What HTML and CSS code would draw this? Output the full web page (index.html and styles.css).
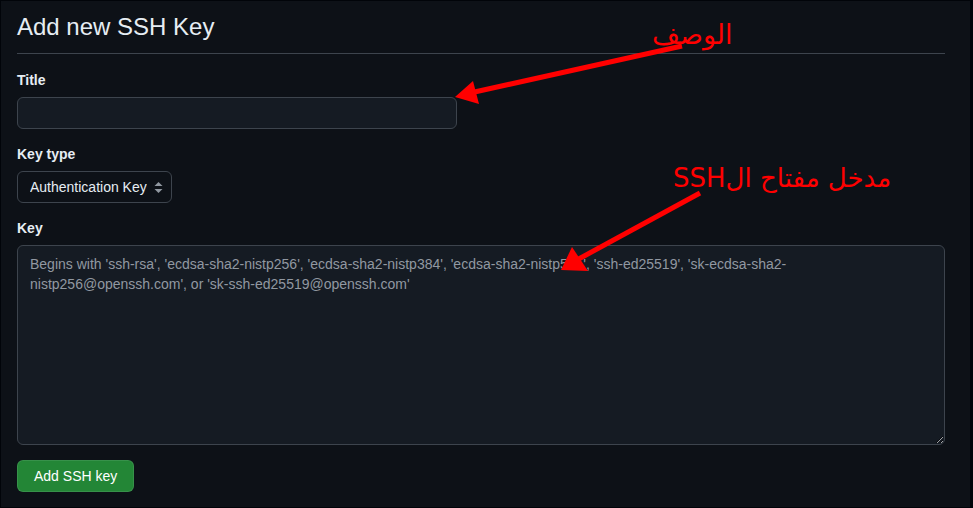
FILE: index.html
```html
<!DOCTYPE html>
<html lang="en">
<head>
<meta charset="utf-8">
<title>Add new SSH Key</title>
<link rel="stylesheet" href="styles.css">
</head>
<body>
<main class="page">
  <h1 class="subhead">Add new SSH Key</h1>
  <form class="form">
    <div class="form-group">
      <label class="label" for="title">Title</label>
      <input class="input input-title" id="title" type="text">
    </div>
    <div class="form-group">
      <label class="label" for="type">Key type</label>
      <div class="select-wrap">
        <select class="select" id="type">
          <option>Authentication Key</option>
          <option>Signing Key</option>
        </select>
        <svg class="select-icon" width="9" height="11" viewBox="0 0 9 11"><path d="M4.5 0 L8.5 4 L0.5 4 Z M0.5 7 L8.5 7 L4.5 11 Z" fill="#9198a1"/></svg>
      </div>
    </div>
    <div class="form-group">
      <label class="label" for="key">Key</label>
      <textarea class="input textarea" id="key" placeholder="Begins with 'ssh-rsa', 'ecdsa-sha2-nistp256', 'ecdsa-sha2-nistp384', 'ecdsa-sha2-nistp521', 'ssh-ed25519', 'sk-ecdsa-sha2-nistp256@openssh.com', or 'sk-ssh-ed25519@openssh.com'"></textarea>
    </div>
    <div class="form-actions">
      <button class="btn-primary" type="button">Add SSH key</button>
    </div>
  </form>

  <div class="note note-title" dir="rtl">الوصف</div>
  <div class="note note-key" dir="rtl">مدخل مفتاح الSSH</div>
  <svg class="arrows" width="973" height="508" viewBox="0 0 973 508">
    <line x1="682" y1="46" x2="470" y2="93" stroke="#ff0000" stroke-width="5"/>
    <polygon points="455,97 473,81 479,104" fill="#ff0000"/>
    <line x1="700" y1="193" x2="575" y2="261" stroke="#ff0000" stroke-width="5"/>
    <polygon points="561,270 572,247 588,271" fill="#ff0000"/>
  </svg>
</main>
</body>
</html>
```

FILE: styles.css
```css
* { box-sizing: border-box; }

html, body {
  margin: 0;
  padding: 0;
  background: #0d1117;
  height: 100%;
}

body {
  font-family: "Liberation Sans", Arial, sans-serif;
  color: #e6edf3;
  font-size: 14px;
  line-height: 1.5;
}

.page {
  position: relative;
  height: 508px;
  border: 1px solid #010409;
  border-right-width: 3px;
  padding: 8px 25px 0 16px;
  overflow: hidden;
}

.subhead {
  margin: 0 0 16px;
  padding-bottom: 8px;
  font-size: 24px;
  font-weight: 400;
  line-height: 36px;
  border-bottom: 1px solid #3d444d;
  color: #e6edf3;
}

.form-group {
  margin: 15px 0;
  display: flex;
  flex-direction: column;
  align-items: flex-start;
}

.form-group:first-child { margin-top: 0; }

.label {
  font-weight: 700;
  font-size: 14px;
  line-height: 21px;
  margin-bottom: 6px;
  color: #e6edf3;
}

.input {
  font-family: inherit;
  font-size: 14px;
  line-height: 20px;
  color: #e6edf3;
  background: #151b23;
  border: 1px solid #3d444d;
  border-radius: 6px;
  outline: none;
}

.input-title {
  width: 440px;
  height: 32px;
  padding: 5px 12px;
}

.select-wrap {
  position: relative;
  display: inline-block;
}

.select {
  appearance: none;
  -webkit-appearance: none;
  font-family: inherit;
  font-size: 14px;
  line-height: 20px;
  color: #e6edf3;
  background: #0d1117;
  border: 1px solid #3d444d;
  border-radius: 6px;
  height: 32px;
  width: 155px;
  padding: 5px 24px 5px 12px;
  outline: none;
}

.select-icon {
  position: absolute;
  left: 137px;
  top: 11px;
  pointer-events: none;
}

.textarea {
  width: 928px;
  height: 200px;
  padding: 8px 12px;
  resize: both;
}

.textarea::placeholder {
  color: #9198a1;
  opacity: 1;
}

.form-actions {
  margin-top: 15px;
}

.btn-primary {
  font-family: inherit;
  font-size: 14px;
  font-weight: 500;
  line-height: 20px;
  height: 32px;
  padding: 0 16px;
  color: #ffffff;
  background: #238636;
  border: 1px solid rgba(240, 246, 252, 0.1);
  border-radius: 6px;
  cursor: pointer;
}

.note {
  position: absolute;
  font-family: "DejaVu Sans", sans-serif;
  font-size: 27px;
  line-height: 1;
  color: #ff0000;
  white-space: nowrap;
}

.note-title {
  left: 651px;
  top: 20px;
}

.note-key {
  font-size: 26px;
  left: 672px;
  top: 164px;
}

.arrows {
  position: absolute;
  left: -1px;
  top: -1px;
  pointer-events: none;
}
```
